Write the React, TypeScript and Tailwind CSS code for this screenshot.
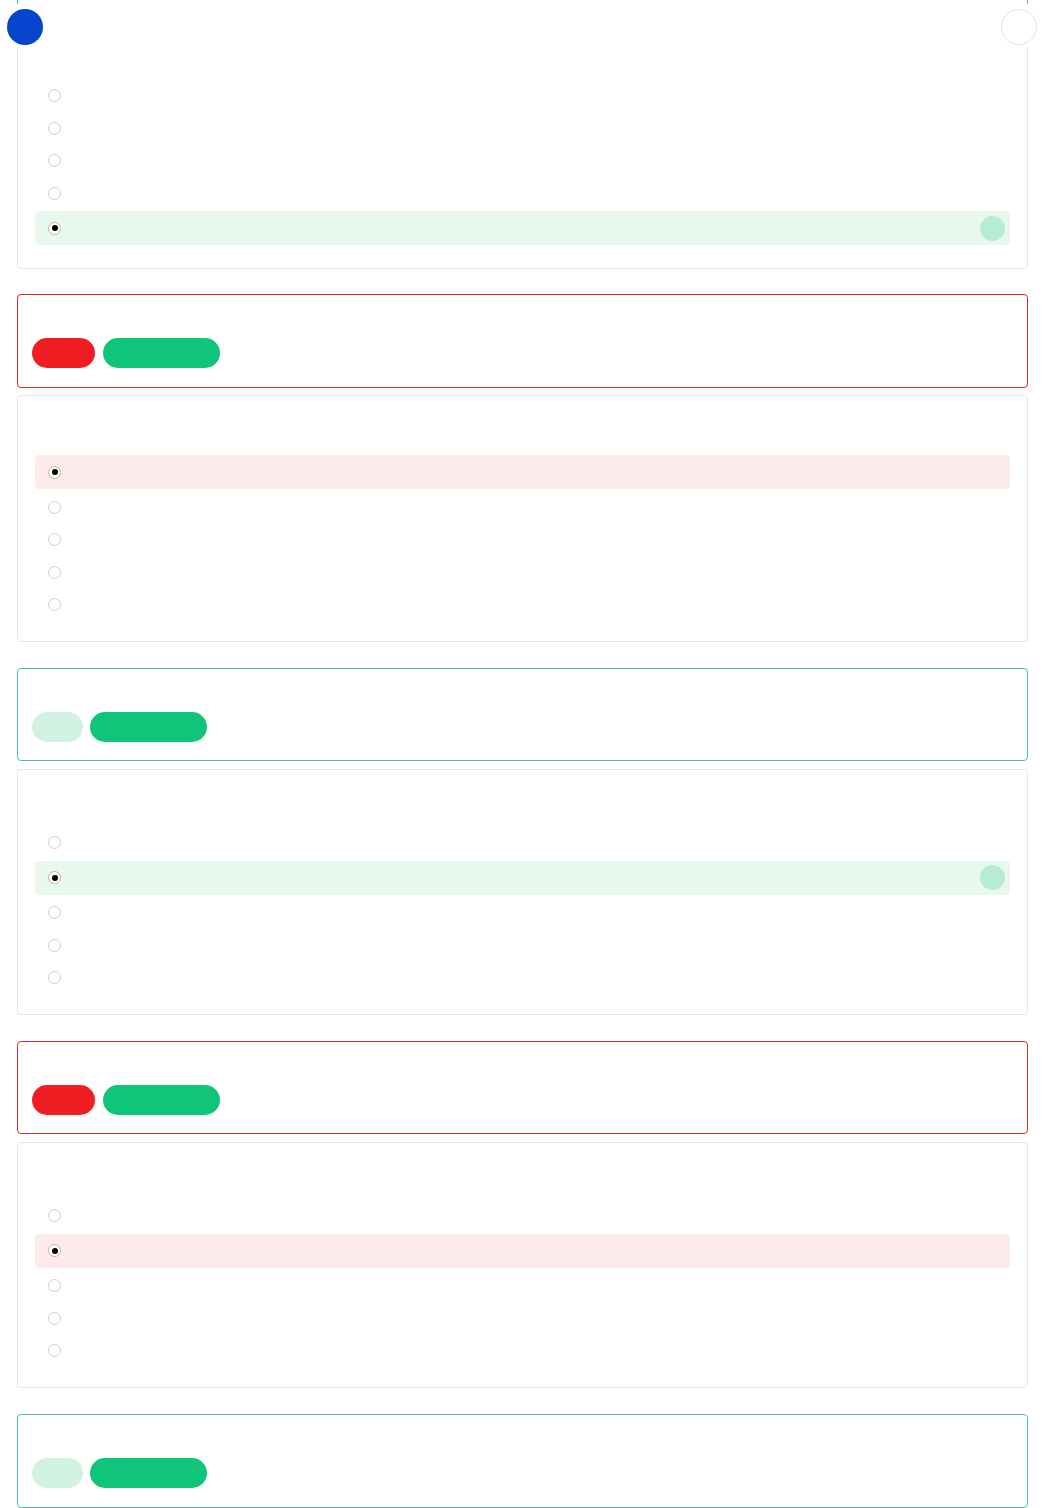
import React from "react";

type Opt = { state: "plain" | "correct" | "wrong" };

function Radio({ checked }: { checked: boolean }) {
  if (checked) {
    return (
      <span className="flex h-[13px] w-[13px] items-center justify-center rounded-full border border-[#cdb48c] bg-white">
        <span className="h-[6px] w-[6px] rounded-full bg-black" />
      </span>
    );
  }
  return <span className="block h-[13px] w-[13px] rounded-full border border-[#cfcfcf] bg-white" />;
}

function OptionRow({ state }: Opt) {
  if (state === "correct") {
    return (
      <div className="flex h-[34px] items-center justify-between rounded-[4px] bg-[#e8f8ef] pl-[13px] pr-[5px]">
        <Radio checked />
        <span className="h-[25px] w-[25px] rounded-full bg-[#b4ecd6]" />
      </div>
    );
  }
  if (state === "wrong") {
    return (
      <div className="flex h-[34px] items-center rounded-[4px] bg-[#fdeaea] pl-[13px]">
        <Radio checked />
      </div>
    );
  }
  return (
    <div className="flex h-[29px] items-center pl-[13px]">
      <Radio checked={false} />
    </div>
  );
}

function QuestionCard({ options, top, bottom }: { options: Opt["state"][]; top: string; bottom: string }) {
  return (
    <div className={`rounded-[4px] border border-[#e5e7eb] bg-white px-[17px] ${top} ${bottom}`}>
      <div className="flex flex-col gap-[3.5px]">
        {options.map((s, i) => (
          <OptionRow key={i} state={s} />
        ))}
      </div>
    </div>
  );
}

function ResultCard({ correct, bottom }: { correct: boolean; bottom: string }) {
  return (
    <div
      className={`rounded-[4px] border bg-white pl-[14px] pt-[43px] ${bottom} ${
        correct ? "border-[#4cc39a]" : "border-[#dc2a2a]"
      }`}
    >
      <div className="flex items-center">
        {correct ? (
          <span className="h-[30px] w-[51px] rounded-full bg-[#d1f2e3]" />
        ) : (
          <span className="h-[30px] w-[63px] rounded-full bg-[#f01e23]" />
        )}
        <span className={`h-[30px] w-[117px] rounded-full bg-[#10c479] ${correct ? "ml-[7px]" : "ml-[8px]"}`} />
      </div>
    </div>
  );
}

export default function App() {
  return (
    <div className="relative min-h-[1508px] overflow-hidden bg-white pl-[17px] pr-[16px]" style={{ fontFamily: '"Liberation Sans", Arial, sans-serif' }}>
      <div className="h-[4px] border-x border-[#4cc39a]" />
      <div className="mt-[7px]">
        <QuestionCard options={["plain", "plain", "plain", "plain", "correct"]} top="pt-[69px]" bottom="pb-[23px]" />
      </div>

      <div className="mt-[25px]">
        <ResultCard correct={false} bottom="pb-[19px]" />
      </div>
      <div className="mt-[7px]">
        <QuestionCard options={["wrong", "plain", "plain", "plain", "plain"]} top="pt-[59px]" bottom="pb-[22px]" />
      </div>

      <div className="mt-[26px]">
        <ResultCard correct bottom="pb-[18px]" />
      </div>
      <div className="mt-[8px]">
        <QuestionCard options={["plain", "correct", "plain", "plain", "plain"]} top="pt-[58px]" bottom="pb-[22px]" />
      </div>

      <div className="mt-[26px]">
        <ResultCard correct={false} bottom="pb-[18px]" />
      </div>
      <div className="mt-[8px]">
        <QuestionCard options={["plain", "wrong", "plain", "plain", "plain"]} top="pt-[58px]" bottom="pb-[22px]" />
      </div>

      <div className="mt-[26px]">
        <ResultCard correct bottom="pb-[19px]" />
      </div>

      <div className="absolute left-0 right-0 top-[4px] flex h-[43px] items-start justify-between bg-white pl-[7px] pr-[7px] pt-[5px]">
        <div className="h-[36px] w-[36px] rounded-full bg-[#0645cc]" />
        <div className="h-[36px] w-[36px] rounded-full border border-[#e2e2e2] bg-white" />
      </div>
    </div>
  );
}
